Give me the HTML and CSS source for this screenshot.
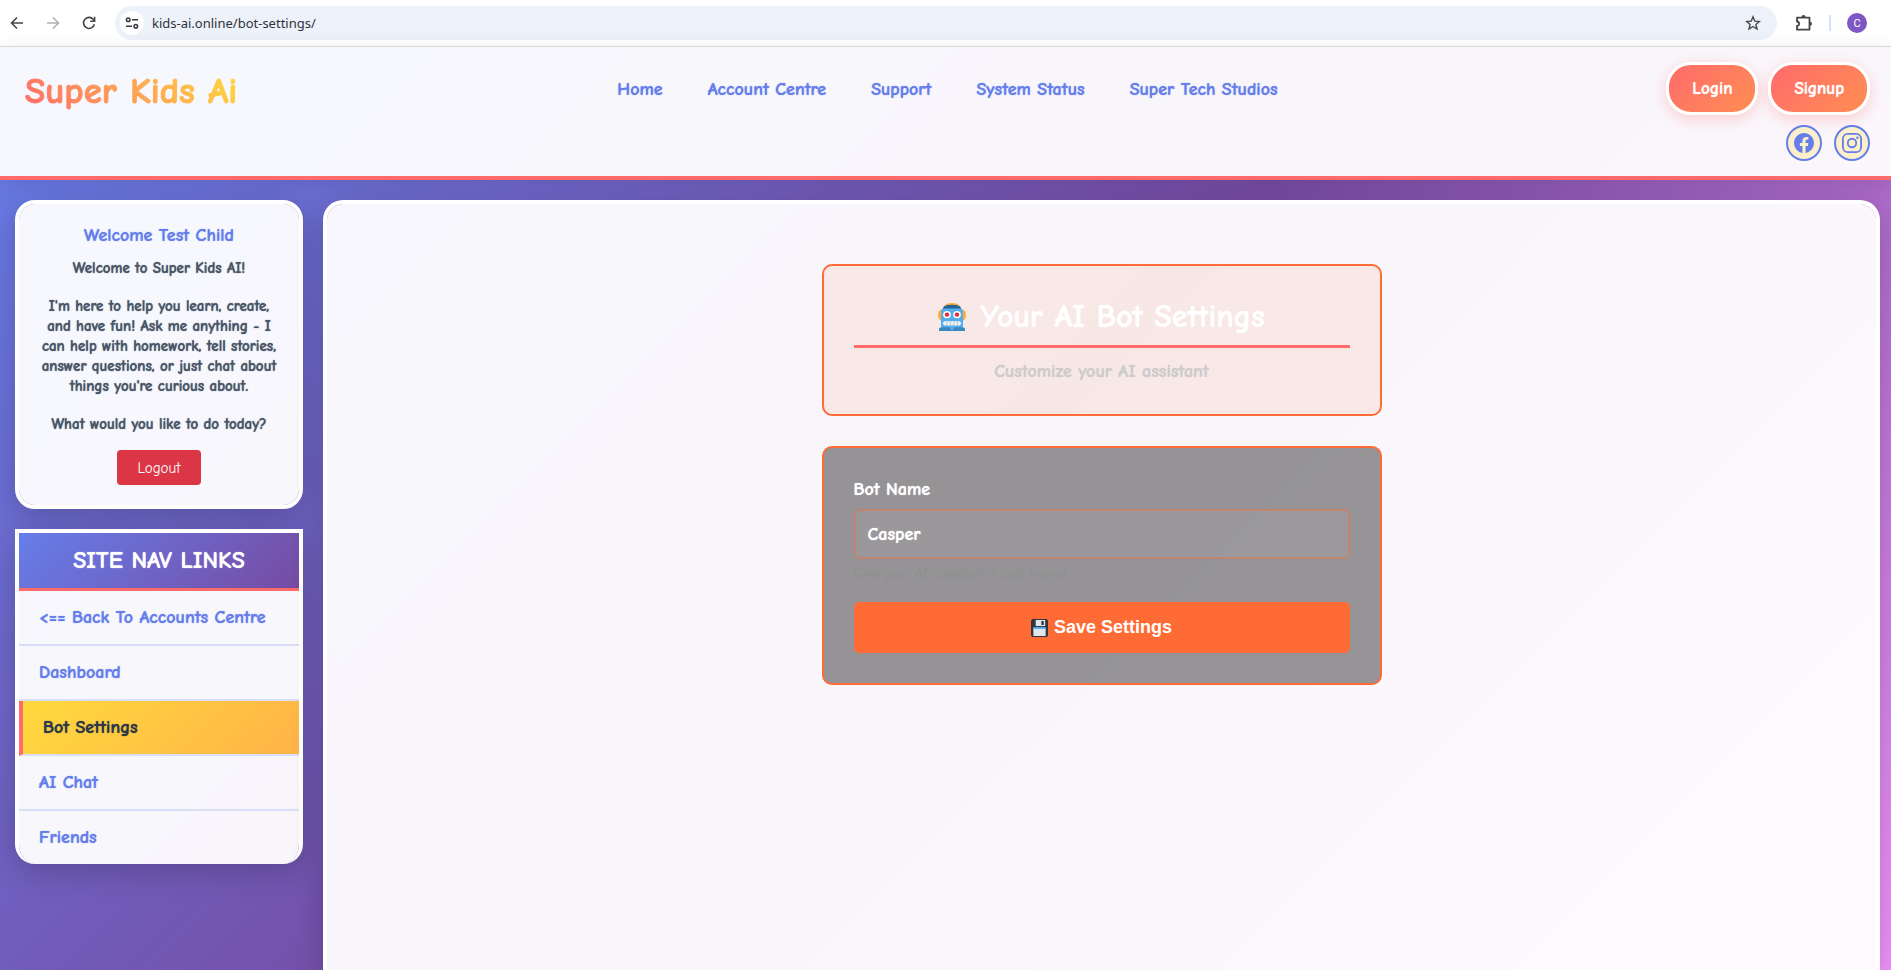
FILE: index.html
```html
<!DOCTYPE html>
<html lang="en">
<head>
<meta charset="utf-8">
<title>Bot Settings - Super Kids Ai</title>
<link rel="stylesheet" href="styles.css">
</head>
<body>
<div class="browser-bar">
  <button class="tool" aria-label="Back"><svg width="16" height="16" viewBox="0 0 16 16"><path d="M14 8H3M8 2.5 2.5 8 8 13.5" fill="none" stroke="#444746" stroke-width="1.6"/></svg></button>
  <button class="tool" aria-label="Forward"><svg width="16" height="16" viewBox="0 0 16 16"><path d="M2 8h11M8 2.5 13.5 8 8 13.5" fill="none" stroke="#b0b1b2" stroke-width="1.6"/></svg></button>
  <button class="tool" aria-label="Reload"><svg width="16" height="16" viewBox="0 0 16 16"><path d="M13.4 9.2A5.5 5.5 0 1 1 12.2 4.3L13.5 5.8M13.6 1.8V6.2H9.2" fill="none" stroke="#444746" stroke-width="1.6"/></svg></button>
  <div class="address">
    <button class="site-info" aria-label="Site information"><svg width="16" height="16" viewBox="0 0 16 16"><g fill="none" stroke="#33363a" stroke-width="1.5"><circle cx="4.2" cy="4.7" r="1.8"/><path d="M8 4.7H14M2 11.3h6"/><circle cx="11.8" cy="11.3" r="1.8"/></g></svg></button>
    <input class="url" aria-label="Address" value="kids-ai.online/bot-settings/">
    <button class="tool" aria-label="Bookmark"><svg width="16" height="16" viewBox="0 0 16 16"><path d="M8 1.8 9.8 6.2 14.4 6.5 10.9 9.5 12 14 8 11.5 4 14 5.1 9.5 1.6 6.5 6.2 6.2Z" fill="none" stroke="#444746" stroke-width="1.4"/></svg></button>
  </div>
  <button class="tool" aria-label="Extensions"><svg width="18" height="18" viewBox="0 0 18 18"><path d="M2 3.7h12.5v12H2v-3.8c2.8-.4 2.8-4 0-4.4Z" fill="none" stroke="#444746" stroke-width="1.8" stroke-linejoin="round"/><path d="M6.5 3a2 2 0 0 1 4 0M15 7.7a2 2 0 0 1 0 4" fill="#444746"/></svg></button>
  <span class="divider"></span>
  <button class="avatar" aria-label="Profile">C</button>
</div>
<div class="page">
  <header class="site-header">
    <a class="logo" href="#">Super Kids Ai</a>
    <nav class="top-nav">
      <a href="#">Home</a><a href="#">Account Centre</a><a href="#">Support</a><a href="#">System Status</a><a href="#">Super Tech Studios</a>
    </nav>
    <div class="header-side">
      <div class="auth"><a class="pill" href="#">Login</a><a class="pill" href="#">Signup</a></div>
      <div class="social">
        <a href="#" aria-label="Facebook"><svg width="20" height="20" viewBox="0 0 24 24"><path fill="#667eea" d="M24 12.073C24 5.446 18.627.073 12 .073S0 5.446 0 12.073c0 5.990 4.388 10.954 10.125 11.854v-8.385H7.078v-3.470h3.047V9.430c0-3.007 1.792-4.669 4.533-4.669 1.312 0 2.686.235 2.686.235v2.953H15.830c-1.491 0-1.956.925-1.956 1.874v2.250h3.328l-.532 3.470h-2.796v8.385C19.612 23.027 24 18.062 24 12.073z"/></svg></a>
        <a href="#" aria-label="Instagram"><svg width="20" height="20" viewBox="0 0 24 24"><g fill="none" stroke="#667eea" stroke-width="2.2"><rect x="1.1" y="1.1" width="21.8" height="21.8" rx="5.9"/><circle cx="12" cy="12" r="5.1"/></g><circle cx="18.4" cy="5.6" r="1.45" fill="#667eea"/></svg></a>
      </div>
    </div>
  </header>
  <div class="layout">
    <aside class="sidebar">
      <section class="welcome">
        <h2>Welcome Test Child</h2>
        <p>Welcome to Super Kids AI!</p>
        <p>I'm here to help you learn, create,<br>and have fun! Ask me anything - I<br>can help with homework, tell stories,<br>answer questions, or just chat about<br>things you're curious about.</p>
        <p>What would you like to do today?</p>
        <button class="logout">Logout</button>
      </section>
      <nav class="side-nav">
        <h2>SITE NAV LINKS</h2>
        <a href="#">&lt;== Back To Accounts Centre</a>
        <a href="#">Dashboard</a>
        <a class="active" href="#">Bot Settings</a>
        <a href="#">AI Chat</a>
        <a href="#">Friends</a>
      </nav>
    </aside>
    <main class="content">
      <div class="intro">
        <h1><svg width="28" height="28" viewBox="0 0 28 30" preserveAspectRatio="none"><path d="M6 5a8 5 0 0 1 16 0z" fill="#ffac33"/><ellipse cx="3.5" cy="13" rx="3.5" ry="6" fill="#ffac33"/><ellipse cx="24.5" cy="13" rx="3.5" ry="6" fill="#ffac33"/><path d="M3 28V9Q4 3 14 3t11 6v19z" fill="#55acee"/><path d="M5 6Q5 2 14 2t9 4z" fill="#226699"/><g fill="#fff"><circle cx="9" cy="12.5" r="3.8"/><circle cx="19" cy="12.5" r="3.8"/></g><g fill="#dd2e44"><circle cx="9" cy="12.5" r="2.3"/><circle cx="19" cy="12.5" r="2.3"/></g><rect x="5" y="19.5" width="18" height="4.5" rx="2" fill="#f1f3f4"/><path d="M9 20v4M12.500 20v4M16 20v4M19.500 20v4" stroke="#99aab5" stroke-width=".7"/><path d="M1 30v-2q0-2 3-2h7l3 3 3-3h7q3 0 3 2v2z" fill="#3b88c3"/></svg>Your AI Bot Settings</h1>
        <p>Customize your AI assistant</p>
      </div>
      <form class="settings">
        <label for="bot-name">Bot Name</label>
        <input id="bot-name" value="Casper">
        <small>Give your AI assistant a cool name!</small>
        <button type="button" class="save"><svg width="17" height="18" viewBox="0 0 18 18" preserveAspectRatio="none"><rect width="18" height="18" rx="2" fill="#31373d"/><path d="M5 1h10v6H5z" fill="#e1e8ed"/><path d="M11 2h2.5v4H11z" fill="#31373d"/><path d="M2.5 9h13v8h-13z" fill="#e1e8ed"/><path d="M2.5 8h13v2h-13z" fill="#55acee"/></svg>Save Settings</button>
      </form>
    </main>
  </div>
</div>
</body>
</html>
```
FILE: styles.css
```css
* { box-sizing: border-box; }
body {
  margin: 0;
  height: 100vh;
  overflow: hidden;
  display: flex;
  flex-direction: column;
  font-family: "Comic Sans MS", "Comic Neue", "Open Sans", sans-serif;
  font-size: 18px;
}
a { text-decoration: none; }
button, input { font-family: inherit; margin: 0; }
h1, h2, p { margin: 0; }

.browser-bar {
  display: flex;
  align-items: center;
  flex: none;
  height: 47px;
  padding: 0 24px 0 9px;
  background: #fff;
  border-bottom: 1px solid #dedfe0;
}
.tool {
  display: flex;
  padding: 0;
  margin-right: 20px;
  border: 0;
  background: none;
}
.address {
  display: flex;
  align-items: center;
  flex: 1;
  height: 34px;
  margin: 0 18px 0 -2px;
  padding-left: 5px;
  border-radius: 17px;
  background: #ecf1fa;
}
.address .tool { margin-right: 16px; }
.site-info {
  display: grid;
  place-items: center;
  width: 24px;
  height: 24px;
  padding: 0;
  border: 0;
  border-radius: 50%;
  background: #fff;
}
.url {
  flex: 1;
  padding: 0 8px;
  border: 0;
  background: none;
  color: #303338;
  font: 13px "Noto Sans", sans-serif;
}
.browser-bar > .tool:nth-last-child(3) { margin-right: 16px; }
.divider { width: 2px; height: 16px; margin-right: 16px; background: #d3e3fd; }
.avatar {
  width: 20px;
  height: 20px;
  padding: 0;
  border: 0;
  border-radius: 50%;
  background: #7e57c2;
  color: #fff;
  font: 11px Roboto, sans-serif;
}

.page {
  display: flex;
  flex-direction: column;
  flex: 1;
  min-height: 0;
  background: linear-gradient(135deg, #667eea 0%, #764ba2 50%, #f093fb 100%);
}
.site-header {
  display: grid;
  grid-template-columns: 1fr auto 1fr;
  align-items: start;
  flex: none;
  padding: 15px 21px 15px 25px;
  border-bottom: 4px solid #ff6b6b;
  background: rgba(255, 255, 255, 0.95);
  background-clip: padding-box;
  box-shadow: 0 4px 20px rgba(0, 0, 0, 0.1);
}
.logo {
  justify-self: start;
  margin-top: 9px;
  background: linear-gradient(45deg, #ff6b6b, #ffd93d);
  background-clip: text;
  color: transparent;
  -webkit-text-stroke: 1px transparent;
  font-size: 37px;
  font-weight: 700;
  line-height: 40px;
}
.top-nav { display: flex; gap: 45px; padding-top: 16px; }
.top-nav a, .pill, .intro h1, .intro p, .settings input, .settings label,
.welcome h2, .welcome p, .side-nav h2, .side-nav a {
  text-shadow: 0 0 1px currentColor;
}
.top-nav a { color: #667eea; font-weight: 700; line-height: 24px; }
.header-side { display: flex; flex-direction: column; align-items: flex-end; gap: 10px; }
.auth { display: flex; gap: 10px; }
.pill {
  padding: 12px 23px;
  border: 3px solid #fff;
  border-radius: 25px;
  background: linear-gradient(135deg, #ff6b6b, #ff8e53);
  box-shadow: 0 4px 15px rgba(255, 107, 107, 0.3);
  color: #fff;
  font-size: 17px;
  font-weight: 700;
  line-height: 23px;
}
.social { display: flex; gap: 12px; }
.social a {
  display: grid;
  place-items: center;
  width: 36px;
  height: 36px;
  border: 2px solid #667eea;
  border-radius: 50%;
  background: #fcf0cc;
}

.layout {
  display: flex;
  align-items: stretch;
  flex: 1;
  gap: 20px;
  min-height: 0;
  padding: 20px 11px 0 15px;
}
.sidebar { display: flex; flex-direction: column; gap: 20px; flex: none; width: 288px; }
.welcome, .side-nav, .content {
  border: 4px solid #fff;
  background: rgba(255, 255, 255, 0.95);
  background-clip: padding-box;
  box-shadow: 0 8px 32px rgba(0, 0, 0, 0.2);
}
.welcome { padding: 20px 15px; border-radius: 20px; text-align: center; }
.welcome h2 { margin-bottom: 10px; color: #667eea; font-size: 18px; line-height: 24px; }
.welcome p {
  margin-bottom: 18px;
  color: #4a5568;
  font-size: 15px;
  font-weight: 700;
  line-height: 20px;
  white-space: nowrap;
}
.welcome p:last-of-type { margin-bottom: 16px; }
.logout {
  display: block;
  width: 84px;
  height: 35px;
  margin: 0 auto;
  border: 0;
  border-radius: 4px;
  background: #dc3545;
  color: #fff;
  font-size: 15px;
}
.side-nav { border-bottom: 0; border-radius: 0 0 20px 20px; overflow: hidden; }
.side-nav h2 {
  border-bottom: 3px solid #ff6b6b;
  background: linear-gradient(135deg, #667eea, #764ba2);
  color: #fff;
  font-size: 24px;
  font-weight: 700;
  line-height: 55px;
  text-align: center;
}
.side-nav a {
  display: block;
  padding: 15px 20px;
  border-bottom: 2px solid #d9dff8;
  color: #667eea;
  font-weight: 700;
  line-height: 23px;
  white-space: nowrap;
}
.side-nav a:last-child { border-bottom: 0; }
.side-nav .active {
  border-left: 4px solid #ff6b6b;
  background: linear-gradient(135deg, #ffd93d, #ffb347);
  background-clip: padding-box;
  color: #2d3748;
}

.content { flex: 1; min-width: 0; border-bottom: 0; border-radius: 20px 20px 0 0; padding: 60px 20px; }
.intro, .settings {
  max-width: 560px;
  margin: 0 auto 30px;
  padding: 30px;
  border: 2px solid #ff6b35;
  border-radius: 10px;
}
.intro { background: rgba(255, 107, 53, 0.1); text-align: center; }
.intro h1 {
  display: flex;
  justify-content: center;
  align-items: center;
  gap: 14px;
  padding-bottom: 8px;
  border-bottom: 3px solid #ff6b6b;
  color: #fff;
  font-size: 32px;
  line-height: 41px;
}
.intro p { padding: 12px 0 0; color: #ccc; font-weight: 700; line-height: 24px; }
.settings { display: flex; flex-direction: column; background: rgba(0, 0, 0, 0.4); }
.settings label { margin-bottom: 7px; color: #fff; font-weight: 700; line-height: 24px; }
.settings input {
  width: 100%;
  height: 50px;
  padding: 12px;
  border: 2px solid rgba(255, 107, 53, 0.4);
  border-radius: 5px;
  background: rgba(255, 255, 255, 0.05);
  background-clip: padding-box;
  color: #fff;
  font-size: 18px;
  font-weight: 700;
}
.settings small { margin: 5px 0 18px; color: #8f8f8f; font-size: 14px; line-height: 20px; }
.save {
  display: flex;
  justify-content: center;
  align-items: center;
  gap: 6px;
  height: 51px;
  border: 0;
  border-radius: 5px;
  background: #ff6b35;
  color: #fff;
  font: 700 18px "Liberation Sans", Arial, sans-serif;
}
```
